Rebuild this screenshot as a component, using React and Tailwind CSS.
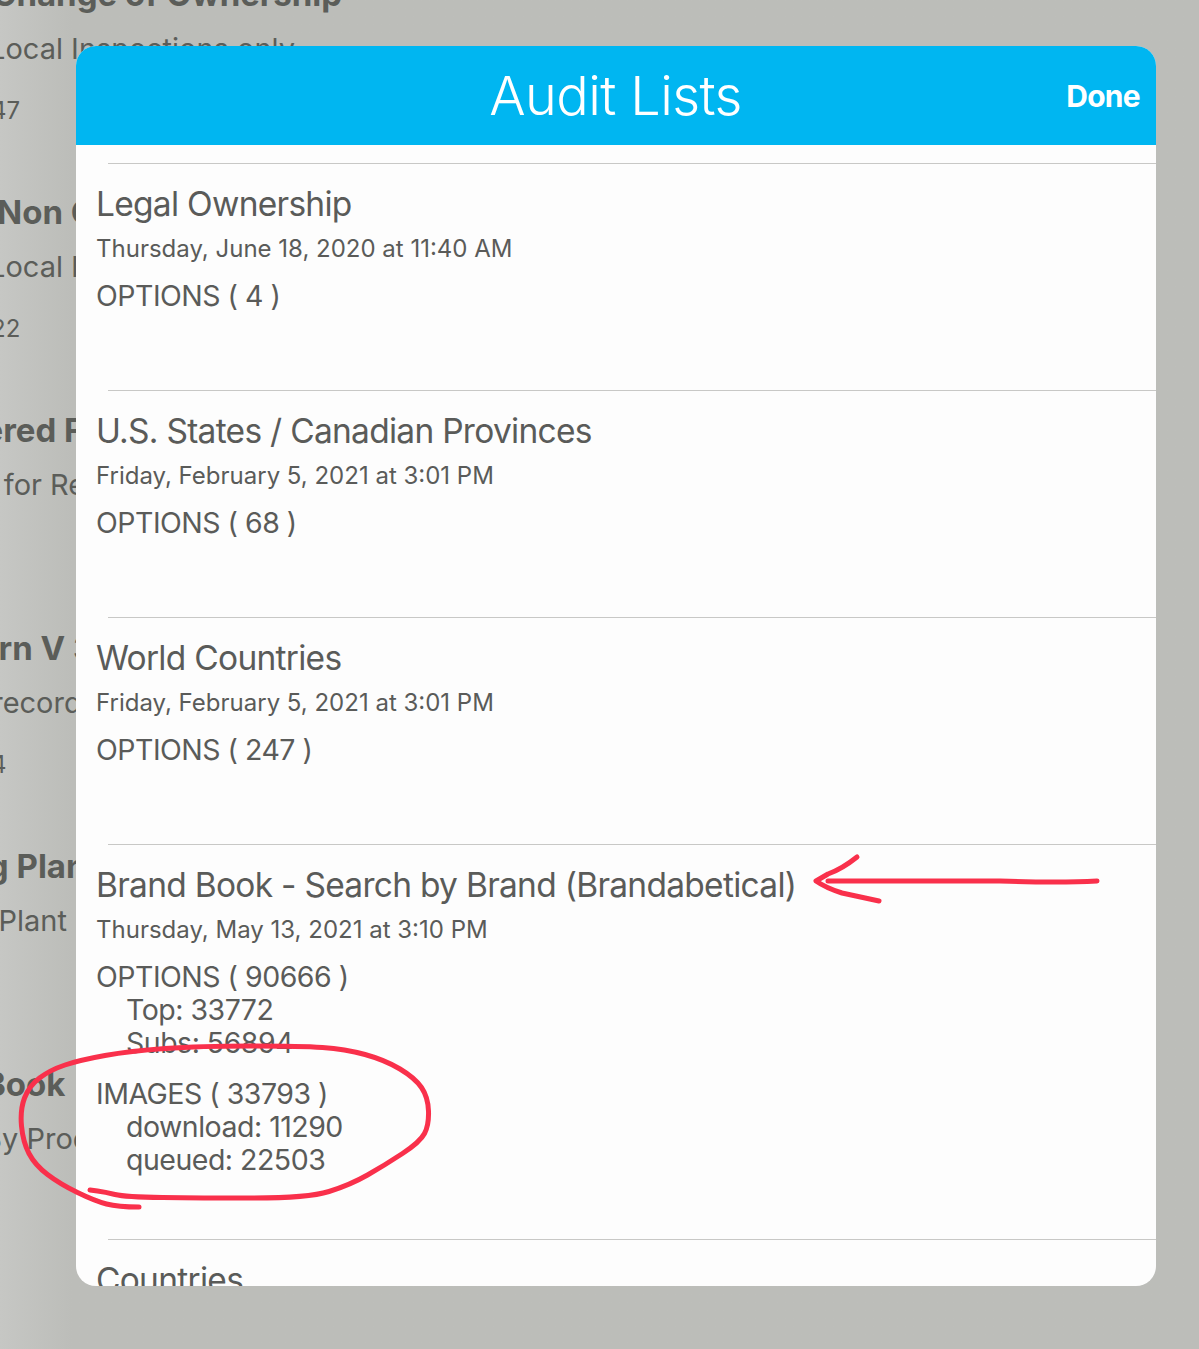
const sans = "font-['Inter','Roboto',sans-serif]";

const backdropRows = [
  { title: "Change of Ownership", titleLeft: "ml-[-8px]", sub: "Local Inspections only", subLeft: "ml-[-11px]", num: "47", numLeft: "ml-[-9px]" },
  { title: "Non Compliance", titleLeft: "ml-[-3px]", sub: "Local Inspections only", subLeft: "ml-[-11px]", num: "22", numLeft: "ml-[-9px]" },
  { title: "Filtered For", titleLeft: "ml-[-66px]", sub: "Filter for Records", subLeft: "ml-[-73px]", num: "", numLeft: "" },
  { title: "Return V 3", titleLeft: "ml-[-75px]", sub: "All records", subLeft: "ml-[-50px]", num: "4", numLeft: "ml-[-9px]" },
  { title: "Manufacturing Plant", titleLeft: "ml-[-230px]", sub: "By Plant", subLeft: "ml-[-45px]", num: "", numLeft: "" },
  { title: "Book", titleLeft: "ml-[-16px]", sub: "By Product", subLeft: "ml-[-17px]", num: "", numLeft: "" },
];

const audits = [
  { title: "Legal Ownership", date: "Thursday, June 18, 2020 at 11:40 AM", options: "OPTIONS ( 4 )" },
  { title: "U.S. States / Canadian Provinces", date: "Friday, February 5, 2021 at 3:01 PM", options: "OPTIONS ( 68 )" },
  { title: "World Countries", date: "Friday, February 5, 2021 at 3:01 PM", options: "OPTIONS ( 247 )" },
  {
    title: "Brand Book - Search by Brand (Brandabetical)",
    date: "Thursday, May 13, 2021 at 3:10 PM",
    options: "OPTIONS ( 90666 )",
    optionLines: ["Top: 33772", "Subs: 56894"],
    images: "IMAGES ( 33793 )",
    imageLines: ["download: 11290", "queued: 22503"],
  },
  { title: "Countries", date: "Friday, February 5, 2021 at 3:01 PM", options: "OPTIONS ( 12 )" },
];

const circle = [
  [139, 1207], [118, 1207], [95, 1201], [60, 1184], [35, 1165], [23, 1142], [20, 1110], [29, 1086], [50, 1070],
  [80, 1060], [130, 1051], [200, 1046], [300, 1046], [345, 1049], [385, 1060], [415, 1078], [428, 1097], [429, 1125],
  [420, 1142], [385, 1165], [350, 1185], [308, 1198], [200, 1198], [125, 1197], [105, 1192], [90, 1190],
];

// smooth the hand drawn stroke through midpoints
const smooth = (pts) => {
  let d = `M${pts[0][0]} ${pts[0][1]}`;
  for (let i = 1; i < pts.length - 1; i++) {
    const mx = (pts[i][0] + pts[i + 1][0]) / 2;
    const my = (pts[i][1] + pts[i + 1][1]) / 2;
    d += ` Q${pts[i][0]} ${pts[i][1]} ${mx} ${my}`;
  }
  const last = pts[pts.length - 1];
  return d + ` L${last[0]} ${last[1]}`;
};

const SubLines = ({ lines }) =>
  lines.map((line) => (
    <div key={line} className="pl-[30px]">
      {line}
    </div>
  ));

const AuditRow = ({ audit }) => (
  <div className="relative min-h-[227px] pt-[21px] pl-[20px] pb-[63px]">
    <div className="absolute top-0 left-[32px] right-0 h-px bg-[#c8c8c6]" />
    <div className="text-[33.5px] leading-[40px] tracking-[-0.72px]">{audit.title}</div>
    <div className="mt-[12px] text-[24px] leading-[26px] tracking-[0px]">{audit.date}</div>
    <div className="mt-[17px] text-[28.5px] leading-[33px] tracking-[-0.5px]">
      <div>{audit.options}</div>
      {audit.optionLines && <SubLines lines={audit.optionLines} />}
      {audit.images && <div className="mt-[18px]">{audit.images}</div>}
      {audit.imageLines && <SubLines lines={audit.imageLines} />}
    </div>
  </div>
);

export default function App() {
  return (
    <div className={`relative h-[1349px] w-[1199px] overflow-hidden bg-gradient-to-r from-[#c6c7c4] from-0% to-[#bcbdb9] to-[6%] ${sans}`}>
      <div className="mt-[-26px] text-[#5b5d59]">
        {backdropRows.map((row) => (
          <div key={row.title} className="h-[218px] whitespace-nowrap">
            <div className={`text-[33px] leading-[40px] font-bold ${row.titleLeft}`}>{row.title}</div>
            <div className={`mt-[17px] text-[29px] leading-[36px] ${row.subLeft}`}>{row.sub}</div>
            {row.num && <div className={`mt-[29px] text-[24px] leading-[30px] ${row.numLeft}`}>{row.num}</div>}
          </div>
        ))}
      </div>

      <div className="absolute left-[76px] top-[46px] flex h-[1240px] w-[1080px] flex-col overflow-hidden rounded-[20px] bg-[#fdfdfd] text-[#5a5b59]">
        <div className="relative flex h-[99px] shrink-0 items-center justify-center bg-[#00b6f1] text-white">
          <div className="ml-[-1px] text-[54px] font-light tracking-[-0.6px]">Audit Lists</div>
          <div className="absolute right-[16px] top-[32px] text-[30px] leading-[36px] font-bold tracking-[-0.7px]">Done</div>
        </div>
        <div className="flex-1 overflow-hidden pt-[18px]">
          {audits.map((audit) => (
            <AuditRow key={audit.title} audit={audit} />
          ))}
        </div>
      </div>

      <svg className="absolute inset-0" width="1199" height="1349" fill="none" stroke="#f9304b" strokeWidth="5" strokeLinecap="round" strokeLinejoin="round">
        <path d={smooth(circle)} />
        <path d="M1097 881 Q1060 883 1000 881 L828 881" />
        <path d="M857 857 Q842 869 828 874 L816 881 Q826 888 842 893 L879 901" />
      </svg>
    </div>
  );
}
